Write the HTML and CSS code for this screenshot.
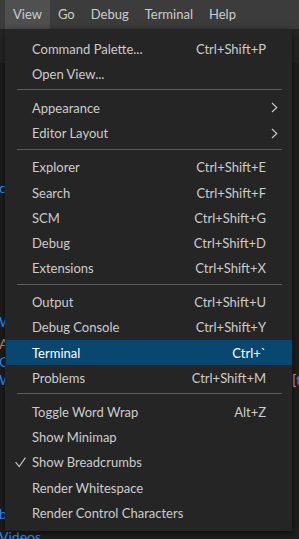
FILE: index.html
```html
<!DOCTYPE html>
<html lang="en">
<head>
    <meta charset="UTF-8">
    <meta name="viewport" content="width=device-width, initial-scale=1.0">
    <title>View menu</title>
    <link rel="stylesheet" href="styles.css">
</head>
<body>
    <!-- title bar with the menubar -->
    <div class="titlebar">
        <div class="menubar-item open">View</div>
        <div class="menubar-item">Go</div>
        <div class="menubar-item">Debug</div>
        <div class="menubar-item">Terminal</div>
        <div class="menubar-item">Help</div>
    </div>

    <!-- editor that shows behind the open menu -->
    <div class="tabs"></div>
    <div class="editor">
        <div class="line l1">c</div>
        <div class="line l2">W</div>
        <div class="line l3 warm">A</div>
        <div class="line l4">C</div>
        <div class="line l5"><span>W</span><span class="tail"><span class="bracket">[</span>t</span></div>
        <div class="line l6">b</div>
        <div class="line l7">Videos</div>
    </div>

    <!-- the open View menu -->
    <div class="menu">
        <div class="item"><span class="check"></span><span class="label">Command Palette...</span><span class="key">Ctrl+Shift+P</span></div>
        <div class="item"><span class="check"></span><span class="label">Open View...</span></div>
        <div class="sep"></div>
        <div class="item"><span class="check"></span><span class="label">Appearance</span>
            <svg class="arrow" width="7" height="11" viewBox="0 0 7 11"><path d="M1 1 L5.8 5.5 L1 10" fill="none" stroke="#cccccc" stroke-width="1.1"/></svg></div>
        <div class="item"><span class="check"></span><span class="label">Editor Layout</span>
            <svg class="arrow" width="7" height="11" viewBox="0 0 7 11"><path d="M1 1 L5.8 5.5 L1 10" fill="none" stroke="#cccccc" stroke-width="1.1"/></svg></div>
        <div class="sep"></div>
        <div class="item"><span class="check"></span><span class="label">Explorer</span><span class="key">Ctrl+Shift+E</span></div>
        <div class="item"><span class="check"></span><span class="label">Search</span><span class="key">Ctrl+Shift+F</span></div>
        <div class="item"><span class="check"></span><span class="label">SCM</span><span class="key">Ctrl+Shift+G</span></div>
        <div class="item"><span class="check"></span><span class="label">Debug</span><span class="key">Ctrl+Shift+D</span></div>
        <div class="item"><span class="check"></span><span class="label">Extensions</span><span class="key">Ctrl+Shift+X</span></div>
        <div class="sep"></div>
        <div class="item"><span class="check"></span><span class="label">Output</span><span class="key">Ctrl+Shift+U</span></div>
        <div class="item"><span class="check"></span><span class="label">Debug Console</span><span class="key">Ctrl+Shift+Y</span></div>
        <div class="item active"><span class="check"></span><span class="label">Terminal</span><span class="key">Ctrl+`</span></div>
        <div class="item"><span class="check"></span><span class="label">Problems</span><span class="key">Ctrl+Shift+M</span></div>
        <div class="sep"></div>
        <div class="item"><span class="check"></span><span class="label">Toggle Word Wrap</span><span class="key">Alt+Z</span></div>
        <div class="item"><span class="check"></span><span class="label">Show Minimap</span></div>
        <div class="item"><span class="check"><svg width="11" height="11" viewBox="0 0 11 11"><path d="M0.6 5.2 L4.2 9.6 L10.4 0.6" fill="none" stroke="#cccccc" stroke-width="1.1"/></svg></span><span class="label">Show Breadcrumbs</span></div>
        <div class="item"><span class="check"></span><span class="label">Render Whitespace</span></div>
        <div class="item"><span class="check"></span><span class="label">Render Control Characters</span></div>
    </div>
</body>
</html>
```
FILE: styles.css
```css
body {
    margin: 0;
    width: 299px;
    height: 539px;
    overflow: hidden;
    background-color: #1e1e1e;
    font-family: Lato, "Open Sans", sans-serif;
    font-size: 13px;
    color: #cccccc;
    position: relative;
}
.titlebar {
    height: 29px;
    background-color: #3c3c3c;
    display: flex;
    padding-left: 5px;
}
.menubar-item {
    padding: 0 8px;
    line-height: 29px;
    color: #cccccc;
}
.menubar-item.open {
    background-color: #505050;
}
.tabs {
    height: 34px;
    background-color: #252526;
}
.editor {
    display: flex;
    flex-direction: column;
    color: #3794ff;
    font-size: 14px;
    line-height: 18px;
}
.line {
    margin-left: -1px;
}
.line.warm {
    color: #ce9178;
}
.l1 { margin-top: 116px; }
.l2 { margin-top: 116px; }
.l3 { margin-top: 4px; }
.l5 {
    display: flex;
    justify-content: space-between;
}
.tail {
    margin-right: -2px;
    color: #7f6bff;
}
.bracket {
    color: #d7ba7d;
}
.l6 { margin-top: 116px; }
.l7 { margin-top: 5px; }

/* dropdown menu */
.menu {
    position: absolute;
    left: 5px;
    top: 29px;
    width: 287px;
    padding: 7px 0 6px;
    background-color: #252526;
    box-shadow: 0 2px 8px rgba(0, 0, 0, 0.6);
}
.item {
    display: flex;
    align-items: center;
    height: 25.2px;
    margin-left: 1px;
    color: #cccccc;
    white-space: nowrap;
}
.item.active {
    background-color: #094771;
    color: #ffffff;
}
.check {
    width: 26px;
    flex: none;
    display: flex;
    align-items: center;
    padding-left: 9px;
    box-sizing: border-box;
}
.check svg {
    display: block;
    margin-top: 1px;
}
.label {
    flex: 1;
}
.key {
    padding-right: 26px;
}
.arrow {
    margin-right: 14px;
}
.sep {
    height: 1px;
    margin: 3px 10px 5px 12px;
    background-color: #5c5c5c;
}
```
